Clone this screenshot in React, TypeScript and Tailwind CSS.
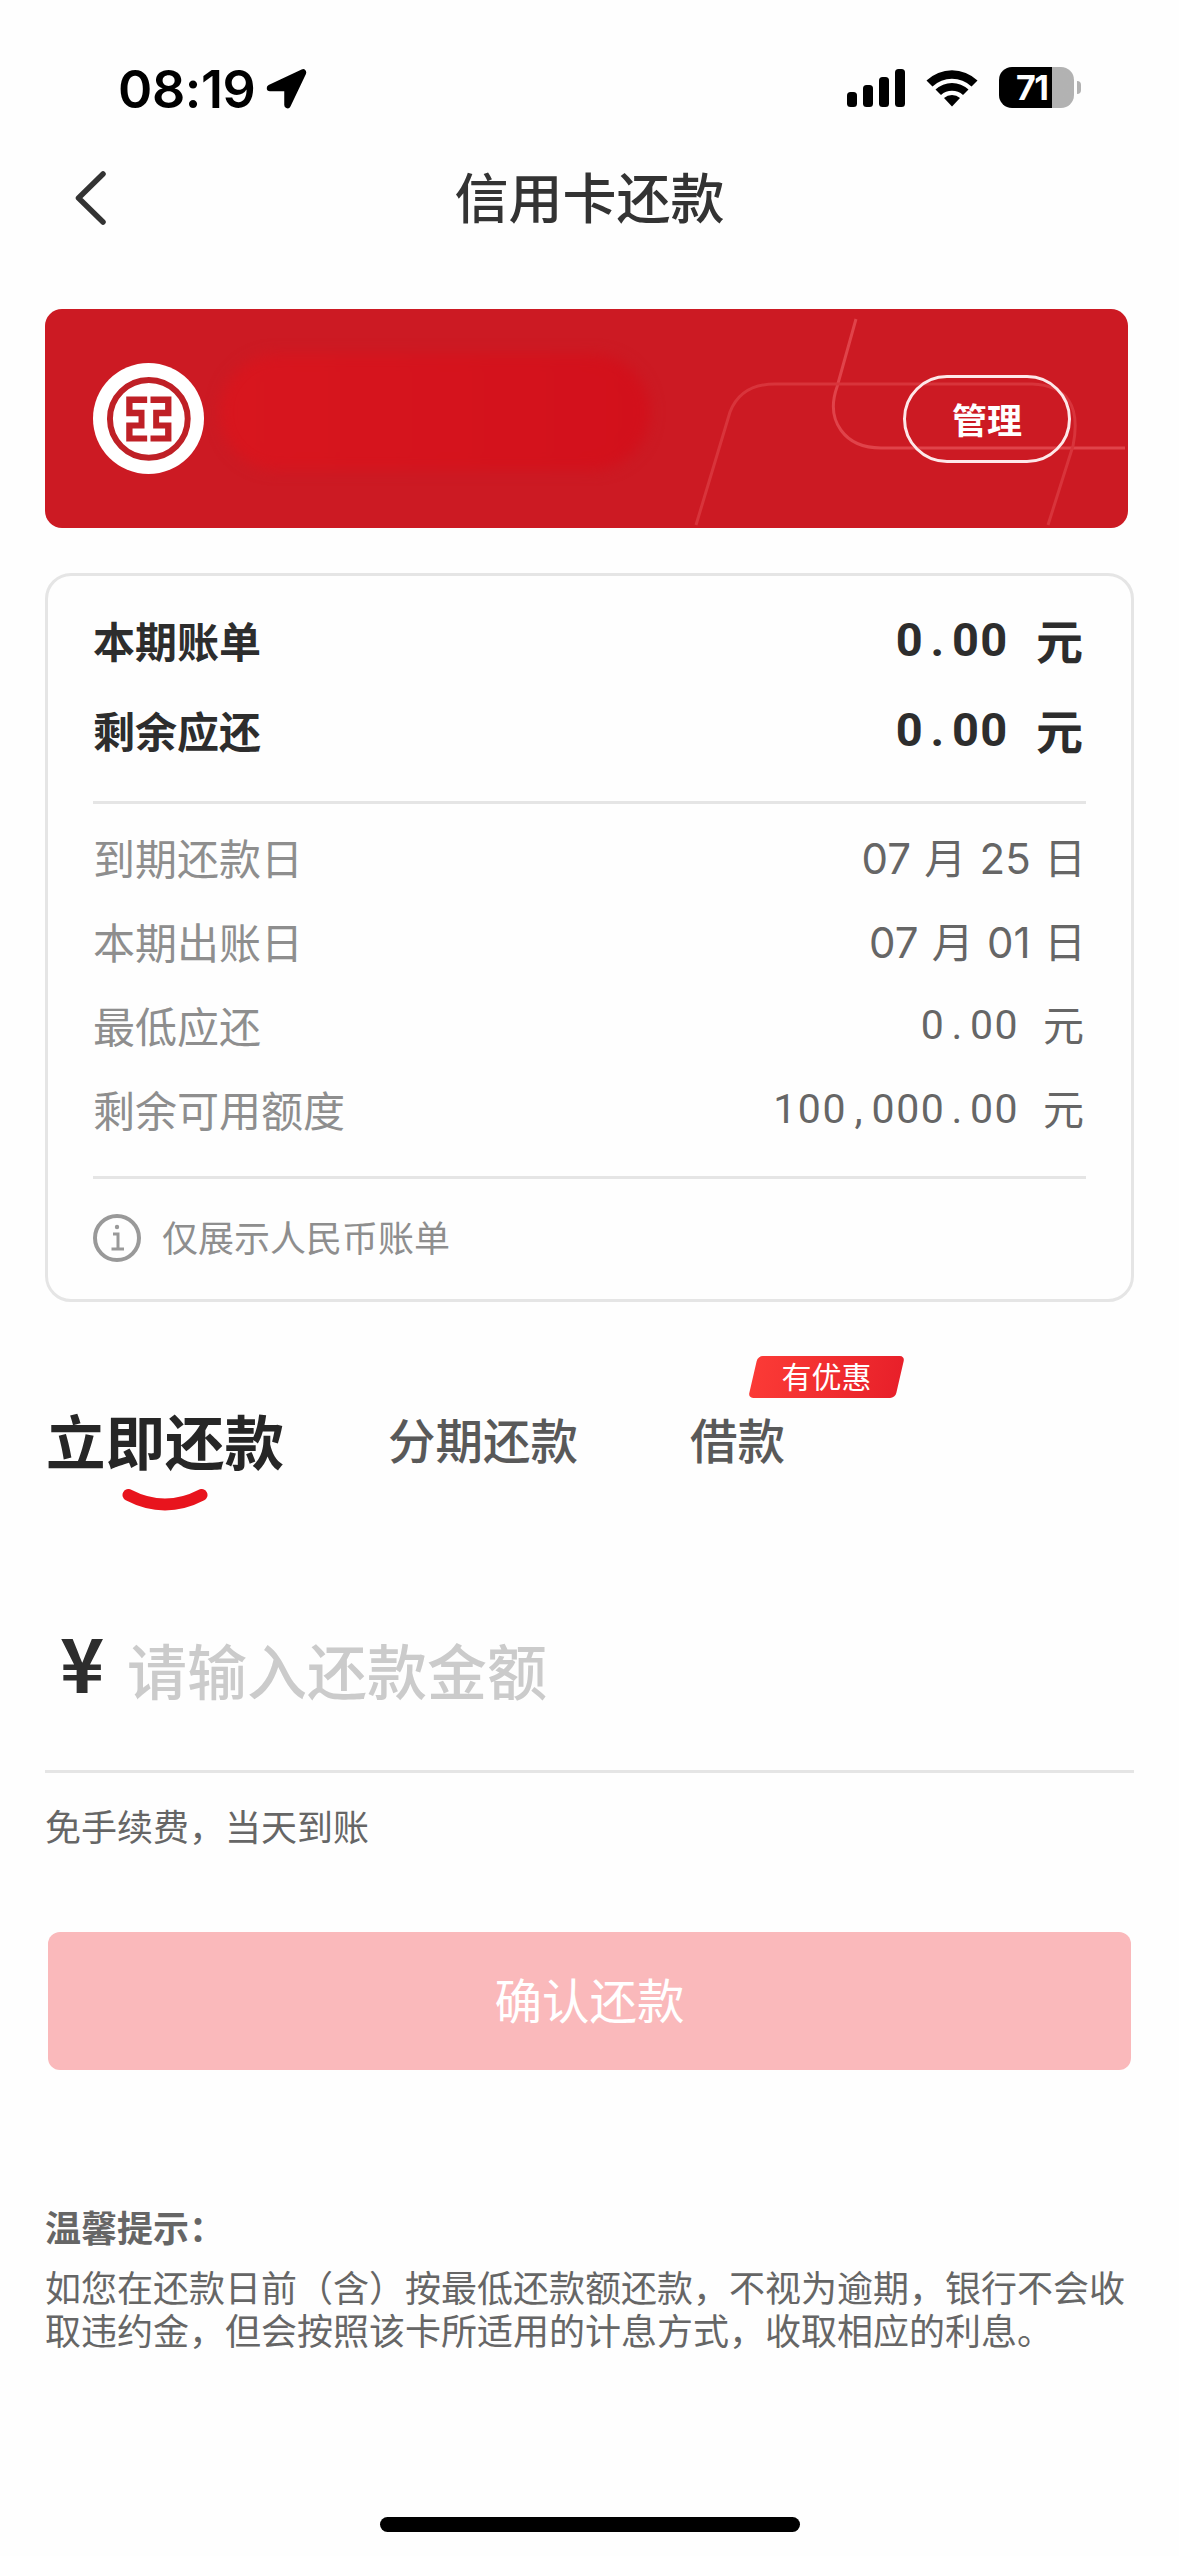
interface Row {
  label: string;
  value: string;
}

const totals: Row[] = [
  { label: '本期账单', value: '0.00' },
  { label: '剩余应还', value: '0.00' },
];

const dates: Row[] = [
  { label: '到期还款日', value: '07 月 25 日' },
  { label: '本期出账日', value: '07 月 01 日' },
];

const limits: Row[] = [
  { label: '最低应还', value: '0.00' },
  { label: '剩余可用额度', value: '100,000.00' },
];

function StatusBar() {
  return (
    <div className="flex h-[141px] items-start justify-between pt-[67px] pr-[97px] pl-[118px]">
      <div className="flex items-center gap-[11px]">
        <span className="pt-[2px] font-['Inter',sans-serif] text-[52px] leading-[42px] font-semibold tracking-[-0.4px] text-black">08:19</span>
        <svg width="42" height="42" viewBox="0 0 42 42">
          <path d="M4 20 L37 4.500 L21.500 37 V20 Z" fill="#000" stroke="#000" strokeWidth="6.500" strokeLinejoin="round" />
        </svg>
      </div>
      <div className="flex items-start">
        <svg className="mt-[2px]" width="58" height="38" viewBox="0 0 58 38">
          <rect x="0" y="23" width="10" height="15" rx="3.500" />
          <rect x="16" y="16" width="10" height="22" rx="3.500" />
          <rect x="32" y="8" width="10" height="30" rx="3.500" />
          <rect x="48" y="0" width="10" height="38" rx="3.500" />
        </svg>
        <svg className="mt-[1px] ml-[21px]" width="52" height="39" viewBox="0 0 52 39">
          <path d="M0.500 12.500 A37 37 0 0 1 51.500 12.500 L45.500 18.500 A28.500 28.500 0 0 0 6.500 18.500 Z" />
          <path d="M9.500 21.500 A24 24 0 0 1 42.500 21.500 L37 27 A16.500 16.500 0 0 0 15 27 Z" />
          <path d="M18 30 A12 12 0 0 1 34 30 L26 38.500 Z" />
        </svg>
        <div className="ml-[21px] flex h-[41px] w-[75px] rounded-[13px] bg-linear-to-r from-black from-71% to-[#b2b2b2] to-71% pl-[17px]">
          <span className="font-['Inter',sans-serif] text-[34px] leading-[42px] font-bold tracking-[-1.5px] text-white">71</span>
        </div>
        <div className="mt-[14px] mr-[1px] ml-[3px] h-[13px] w-[4px] rounded-r-full bg-[#b2b2b2]" />
      </div>
    </div>
  );
}

function NavBar() {
  return (
    <div className="relative flex h-[168px] items-start justify-center pt-[25px]">
      <svg className="absolute top-[27px] left-[72px]" width="38" height="60" viewBox="0 0 38 60">
        <path d="M31 6 L6.500 30 L31 54" fill="none" stroke="#333" strokeWidth="5.500" strokeLinecap="round" strokeLinejoin="round" />
      </svg>
      <h1 className="text-[54px] leading-[60px] font-medium text-[#333]">信用卡还款</h1>
    </div>
  );
}

function BankLogo() {
  return (
    <svg width="111" height="111" viewBox="15 14 334 334">
      <circle cx="182" cy="181" r="167" fill="#fff" />
      <circle cx="183" cy="182" r="117" fill="none" stroke="#bf2026" strokeWidth="18" />
      <path
        fill="#bf2026"
        d="M115 115H178V134H134V155H170V211H134V232H178V250H115V193H152V174H115Z M251 115H188V134H232V155H196V211H232V232H188V250H251V193H214V174H251Z"
      />
    </svg>
  );
}

function BankCard() {
  return (
    <div className="relative mr-[51px] ml-[45px] flex h-[219px] items-center overflow-hidden rounded-[17px] bg-[#cc1a23] pr-[57px] pl-[48px]">
      <svg className="absolute inset-0" width="1083" height="219" viewBox="0 0 1083 219" fill="none" strokeWidth="3">
        <path d="M811 10 L792 78 C780 112 800 139 836 139 H1080" stroke="#e0434a" />
        <path d="M651 216 L685 103 Q696 75 730 75 H987 Q1040 77 1028 137 L1003 216" stroke="#d8343b" />
      </svg>
      <BankLogo />
      {/* masked card holder line */}
      <div className="mb-[14px] ml-[16px] h-[116px] w-[430px] rounded-full bg-linear-to-r from-[#d8161e] to-[#d2101b] blur-[7px]" />
      <button className="relative ml-auto h-[88px] w-[168px] rounded-full border-[3px] border-[#fde8e9] text-[35px] leading-[82px] font-bold text-white">
        管理
      </button>
    </div>
  );
}

// every character takes the same width, so the decimals line up
function Amount({ value }: { value: string }) {
  return (
    <span className="flex items-center">
      <span className="pt-[3px] font-['Roboto',sans-serif]">
        {value.split('').map((char, i) => (
          <span key={i} className="inline-block w-[0.6em] text-center">{char}</span>
        ))}
      </span>
      <span className="ml-[0.6em]">元</span>
    </span>
  );
}

function BillCard() {
  return (
    <div className="mx-[45px] mt-[45px] flex h-[729px] flex-col rounded-[26px] border-[3px] border-[#e5e5e5] px-[45px] pt-[18px]">
      {totals.map(t => (
        <div key={t.label} className="flex h-[90px] items-center justify-between text-[#2d2d2d]">
          <span className="text-[42px] font-bold">{t.label}</span>
          <span className="pr-[3px] text-[47px] font-bold">
            <Amount value={t.value} />
          </span>
        </div>
      ))}
      <div className="mt-[27px] mb-[10px] h-[3px] shrink-0 bg-[#e5e5e5]" />
      {dates.map(d => (
        <div key={d.label} className="flex h-[84px] items-center justify-between text-[42px]">
          <span className="text-[#8e8e8e]">{d.label}</span>
          <span className="pt-[4px] font-['Inter','Noto_Sans_CJK_SC',sans-serif] [word-spacing:1.5px] text-[#666]">{d.value}</span>
        </div>
      ))}
      {limits.map(l => (
        <div key={l.label} className="flex h-[84px] items-center justify-between text-[42px]">
          <span className="text-[#8e8e8e]">{l.label}</span>
          <span className="pr-[2px] text-[41px] text-[#666]">
            <Amount value={l.value} />
          </span>
        </div>
      ))}
      <div className="mt-[26px] h-[3px] shrink-0 bg-[#e5e5e5]" />
      <div className="mt-[35px] flex items-center gap-[21px]">
        <svg width="48" height="48" viewBox="0 0 48 48" fill="none" stroke="#999" strokeWidth="3">
          <circle cx="24" cy="24" r="22" strokeWidth="4" />
          <path d="M20 20H25V35M18.500 35H31" />
          <circle cx="24" cy="13" r="2.200" fill="#999" stroke="none" />
        </svg>
        <span className="pb-[3px] text-[36px] leading-[45px] text-[#8e8e8e]">仅展示人民币账单</span>
      </div>
    </div>
  );
}

function Tabs() {
  return (
    <div className="mt-[53px] flex h-[158px] pl-[46px]">
      <div className="flex w-[238px] flex-col items-center pt-[54px]">
        <span className="text-[59.500px] leading-[60px] font-bold text-[#262626]">立即还款</span>
        <svg className="mt-[20px]" width="86" height="22" viewBox="0 0 86 22">
          <path d="M6.500 6 Q43 25 79.500 6" fill="none" stroke="#e8141d" strokeWidth="12" strokeLinecap="round" />
        </svg>
      </div>
      <span className="ml-[104px] pt-[56px] text-[47.500px] leading-[56px] font-medium text-[#595959]">分期还款</span>
      <div className="relative ml-[112px] pt-[56px] text-[47.500px] leading-[56px] font-medium text-[#595959]">
        借款
        <div className="absolute top-[1px] left-[63px] flex h-[42px] w-[147px] items-center justify-center text-[30px] leading-[42px] font-normal text-white">
          <div className="absolute inset-0 -skew-x-[13deg] rounded-[5px] bg-linear-to-r from-[#fb3a36] to-[#e8202a]" />
          <span className="relative pb-[3px] leading-[39px]">有优惠</span>
        </div>
      </div>
    </div>
  );
}

function AmountInput() {
  return (
    <div className="mx-[45px] mt-[121px]">
      <div className="flex h-[139px] items-start border-b-[3px] border-[#e5e5e5]">
        <span className="w-[82px] pl-[15px] text-[75px] leading-[54px] font-bold text-[#2d2d2d]">¥</span>
        <span className="pt-[5px] text-[60px] leading-[60px] font-medium text-[#cbcbcb]">请输入还款金额</span>
      </div>
      <p className="mt-[28px] text-[36px] leading-[48px] text-[#666]">免手续费，当天到账</p>
    </div>
  );
}

export default function App() {
  return (
    <div className="h-[2556px] w-[1179px] overflow-hidden bg-[#fefefe] font-['Noto_Sans_CJK_SC',sans-serif]" lang="zh-CN">
      <StatusBar />
      <NavBar />
      <BankCard />
      <BillCard />
      <Tabs />
      <AmountInput />
      <button className="mt-[83px] ml-[48px] block h-[138px] w-[1083px] rounded-[12px] bg-[#fab9bb] pb-[4px] text-[47.500px] leading-[134px] text-white">
        确认还款
      </button>
      <div className="mt-[133px] ml-[45px] w-[1089px] text-[36px] text-[#666]">
        <h2 className="leading-[46px] font-bold">温馨提示：</h2>
        <p className="mt-[16px] leading-[42.500px]">
          如您在还款日前（含）按最低还款额还款，不视为逾期，银行不会收取违约金，但会按照该卡所适用的计息方式，收取相应的利息。
        </p>
      </div>
      <div className="mx-auto mt-[167px] h-[15px] w-[420px] rounded-full bg-black" />
    </div>
  );
}
